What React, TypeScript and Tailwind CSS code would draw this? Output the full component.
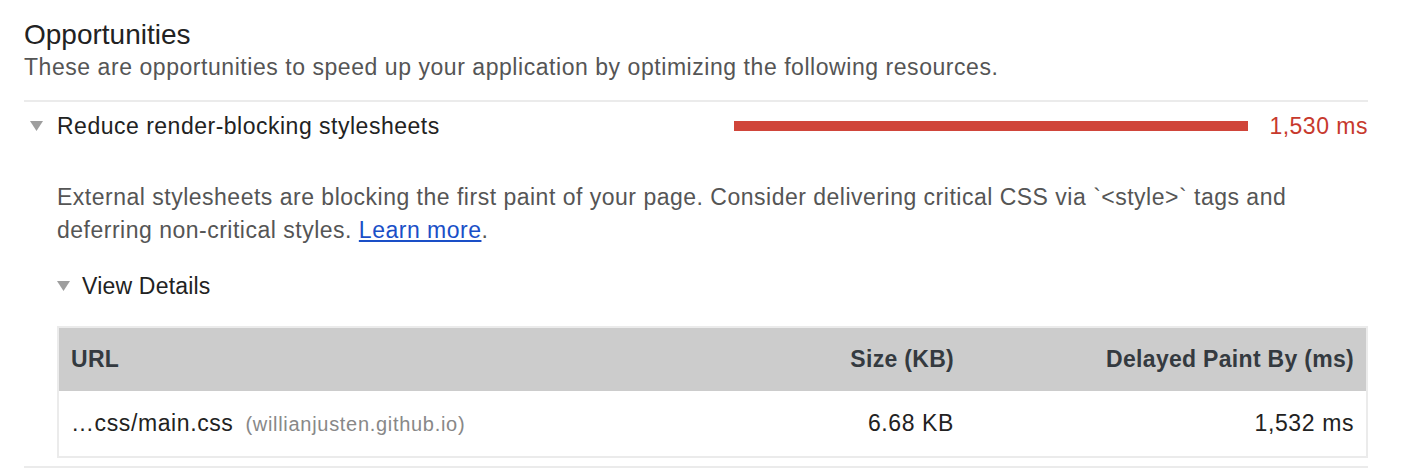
function Caret({ className }: { className: string }) {
  return (
    <svg width="13" height="10" viewBox="0 0 13 10" className={className}>
      <path d="M0 0 L13 0 L6.5 10 Z" fill="#9e9e9e" />
    </svg>
  );
}

export default function App() {
  return (
    <div className="w-[1408px] h-[470px] bg-white overflow-hidden font-['Liberation_Sans',Arial,sans-serif] pl-6 pr-10 pt-[18px]">
      {/* Section header */}
      <div className="text-[28px] leading-[34px] text-[#222]">Opportunities</div>
      <div className="text-[23px] leading-[30px] tracking-[0.55px] text-[#555]">
        These are opportunities to speed up your application by optimizing the following resources.
      </div>

      {/* Audit */}
      <div className="mt-[18px] border-t-2 border-[#ebebeb]">
        <div className="flex items-center h-[48px]">
          <div className="w-[33px] pl-[6px]">
            <Caret className="block" />
          </div>
          <span className="text-[23px] tracking-[0.5px] text-[#222]">Reduce render-blocking stylesheets</span>
          <div className="flex-1" />
          <div className="w-[514px] h-[10px] bg-[#d0453a]" />
          <span className="w-[120px] text-right text-[23px] tracking-[0.5px] text-[#c7392d]">1,530 ms</span>
        </div>

        <div className="pl-[33px] pt-[31px]">
          <p className="text-[23px] leading-[33px] tracking-[0.5px] text-[#555]">
            External stylesheets are blocking the first paint of your page. Consider delivering critical CSS via `&lt;style&gt;` tags and deferring non-critical styles.{' '}
            <a className="text-[#1a4fc7] underline">Learn more</a>.
          </p>

          <div className="flex items-center mt-[22px] h-[34px]">
            <div className="w-[25px]">
              <Caret className="block" />
            </div>
            <span className="text-[23px] tracking-[0.2px] text-[#222]">View Details</span>
          </div>

          <table className="mt-[23px] w-full border-2 border-[#ebebeb] border-collapse">
            <thead>
              <tr className="bg-[#cccccc] h-[64px] text-[23px] tracking-[0.3px] font-bold text-[#343a40]">
                <th className="text-left pl-[12px]">URL</th>
                <th className="text-right">Size (KB)</th>
                <th className="text-right pr-[12px] w-[413px]">Delayed Paint By (ms)</th>
              </tr>
            </thead>
            <tbody>
              <tr className="h-[66px] text-[23px] tracking-[0.6px] text-[#222]">
                <td className="pl-[12px]">
                  …css/main.css<span className="ml-[12px] text-[20px] tracking-[0.7px] text-[#888]">(willianjusten.github.io)</span>
                </td>
                <td className="text-right">6.68 KB</td>
                <td className="text-right pr-[12px]">1,532 ms</td>
              </tr>
            </tbody>
          </table>
        </div>
        <div className="mt-[8px] border-t-2 border-[#ebebeb]" />
      </div>
    </div>
  );
}
